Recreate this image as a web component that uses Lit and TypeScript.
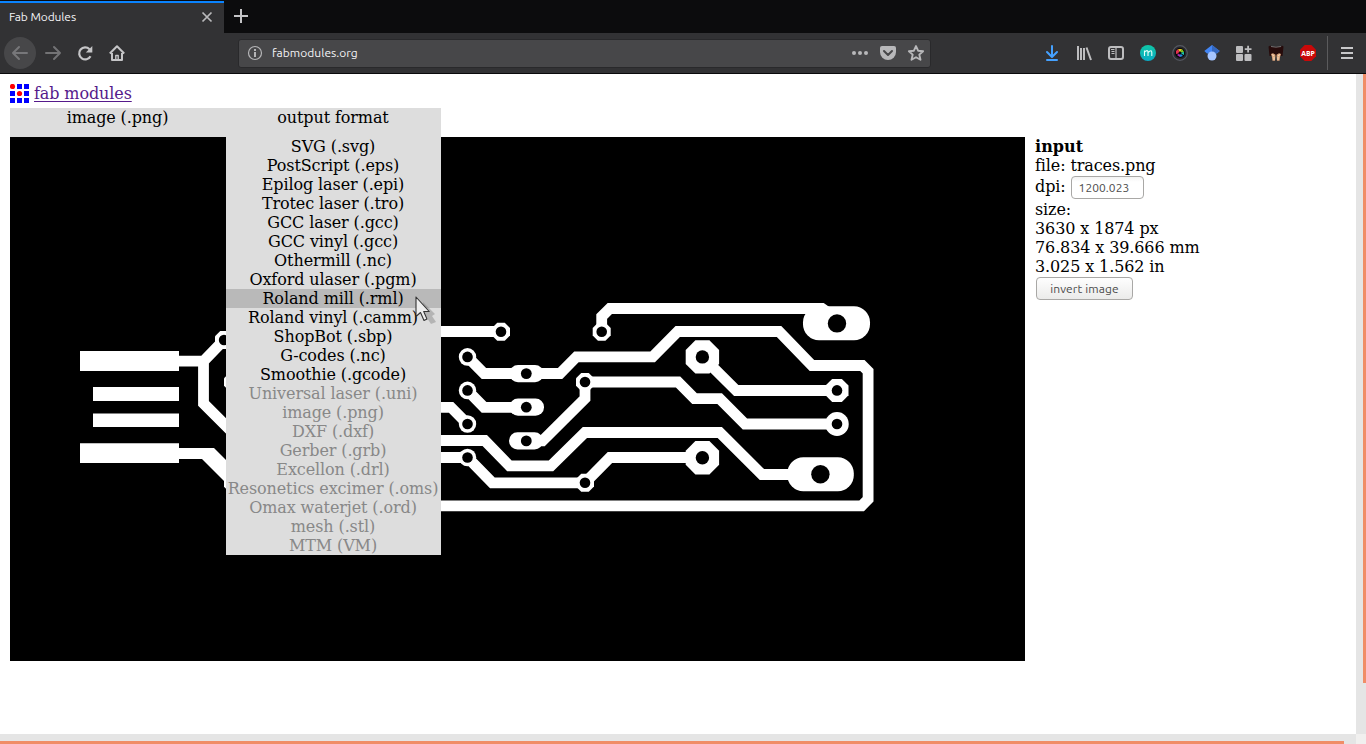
import { LitElement, html, css, svg } from "lit";
import { customElement } from "lit/decorators.js";
import { classMap } from "lit/directives/class-map.js";

const FORMATS = [
  "SVG (.svg)", "PostScript (.eps)", "Epilog laser (.epi)", "Trotec laser (.tro)",
  "GCC laser (.gcc)", "GCC vinyl (.gcc)", "Othermill (.nc)", "Oxford ulaser (.pgm)",
  "Roland mill (.rml)", "Roland vinyl (.camm)", "ShopBot (.sbp)", "G-codes (.nc)",
  "Smoothie (.gcode)", "Universal laser (.uni)", "image (.png)", "DXF (.dxf)",
  "Gerber (.grb)", "Excellon (.drl)", "Resonetics excimer (.oms)",
  "Omax waterjet (.ord)", "mesh (.stl)", "MTM (VM)",
];
const FIRST_DISABLED = 13;
const HOVERED = 8;

@customElement("browser-chrome")
class BrowserChrome extends LitElement {
  static styles = css`
    :host { display: block; height: 74px; font-family: "Ubuntu", "Noto Sans", sans-serif; font-size: 12px; color: #f4f4f6; letter-spacing: 0; }
    * { box-sizing: border-box; }
    svg { display: block; flex: none; overflow: visible; }
    .tabs { height: 33px; background: #0c0c0d; display: flex; align-items: stretch; padding-top: 1px; }
    .tab { width: 224px; background: #323234; border-top: 2px solid #0a84ff; display: flex; align-items: center; justify-content: space-between; padding: 0 9px 2px; }
    .title { letter-spacing: -0.1px; line-height: 16px; padding-bottom: 1px; }
    .plus { margin: 7px 0 0 9px; }
    .bar { height: 41px; background: #323234; border-bottom: 1px solid #0a0a0b; display: flex; align-items: center; padding-left: 4px; }
    .back { width: 32px; height: 32px; border-radius: 50%; background: #474749; display: grid; place-items: center; }
    .gap { margin-left: 16px; }
    .first { margin-left: 9px; }
    .url { width: 693px; height: 29px; margin-left: 113px; background: #474749; border: 1px solid #29292b; border-radius: 3px; display: flex; align-items: center; padding: 0 6px 0 8px; }
    .host { flex: 1; margin-left: 9px; letter-spacing: 0.03px; line-height: 16px; padding-bottom: 1px; }
    .url svg + svg { margin-left: 12px; }
    .tools { display: flex; margin-left: 113px; gap: 16px; }
    .abp { font: 700 7.5px/10px "Open Sans", sans-serif; }
    .menu { height: 34px; border-left: 1px solid #5b5b5d; margin-left: 11px; padding-left: 11px; display: flex; align-items: center; }
  `;

  render() {
    return html`
      <div class="tabs">
        <div class="tab">
          <span class="title">Fab Modules</span>
          <svg width="16" height="16" viewBox="0 0 16 16"><path d="M3.500 3.500l9 9M12.500 3.500l-9 9" stroke="#b9b9bb" stroke-width="1.700" fill="none"/></svg>
        </div>
        <svg class="plus" width="16" height="16" viewBox="0 0 16 16"><path d="M8 1v14M1 8h14" stroke="#c4c4c6" stroke-width="2"/></svg>
      </div>
      <div class="bar">
        <div class="back"><svg width="18" height="18" viewBox="0 0 18 18" fill="none" stroke="#77777a" stroke-width="2" stroke-linecap="round" stroke-linejoin="round"><path d="M16 9H2M8 3L2 9l6 6"/></svg></div>
        <svg class="first" width="16" height="16" viewBox="0 0 16 16" fill="none" stroke="#737375" stroke-width="2" stroke-linecap="round" stroke-linejoin="round"><path d="M1 8h14M9 2l6 6-6 6"/></svg>
        <svg class="gap" width="16" height="16" viewBox="0 0 16 16"><path d="M13.500 11.200A6 6 0 1 1 12.500 4.200" fill="none" stroke="#c5c5c7" stroke-width="2.200"/><path d="M15.300 1v6.500H8.800z" fill="#c5c5c7"/></svg>
        <svg class="gap" width="16" height="16" viewBox="0 0 16 16" fill="none" stroke="#c5c5c7" stroke-width="2" stroke-linejoin="round"><path d="M.8 8.500L8 1.300l7.200 7.200M3 8v7h10V8"/><path d="M6.800 15v-4.500h2.400V15" stroke-width="1.400"/></svg>
        <div class="url">
          <svg width="16" height="16" viewBox="0 0 16 16"><circle cx="8" cy="8" r="6.500" fill="none" stroke="#b5b5b7" stroke-width="1.200"/><path d="M7 7h2v5H7zM7 4h2v2H7z" fill="#b5b5b7"/></svg>
          <span class="host">fabmodules.org</span>
          <svg width="16" height="16" viewBox="0 0 16 16" fill="#b8b8ba"><circle cx="2" cy="8" r="2"/><circle cx="8" cy="8" r="2"/><circle cx="14" cy="8" r="2"/></svg>
          <svg width="16" height="16" viewBox="0 0 16 16"><path d="M2 1h12a2 2 0 0 1 2 2v4a8 8 0 0 1-16 0V3a2 2 0 0 1 2-2z" fill="#b8b8ba"/><path d="M4 6l4 4 4-4" fill="none" stroke="#474749" stroke-width="2" stroke-linecap="round" stroke-linejoin="round"/></svg>
          <svg width="16" height="16" viewBox="0 0 16 16"><path d="M8 1.100l2.100 4.600 5 .5-3.800 3.400 1.200 5.200L8 12.200l-4.500 2.600 1.200-5.200L.9 6.200l5-.5z" fill="none" stroke="#b8b8ba" stroke-width="1.900" stroke-linejoin="round"/></svg>
        </div>
        <div class="tools">
          <svg width="16" height="16" viewBox="0 0 16 16" fill="none" stroke="#45a1ff" stroke-width="2" stroke-linecap="round" stroke-linejoin="round"><path d="M8 1v10M3 7l5 5 5-5M3 15h10" /></svg>
          <svg width="16" height="16" viewBox="0 0 16 16" fill="none" stroke="#bdbdbf" stroke-width="2"><path d="M2 1v14M5 3v12M8 3v12M10.500 2.500L15 15"/></svg>
          <svg width="16" height="16" viewBox="0 0 16 16" fill="none" stroke="#bdbdbf"><rect x="1" y="2" width="14" height="12" rx="2" stroke-width="2"/><path d="M8 2v12" stroke-width="1.200"/><path d="M3 4.500h3.500M3.500 6.500h3M3.500 8.500h3" /></svg>
          <svg width="16" height="16" viewBox="0 0 16 16"><defs><linearGradient id="teal" x2="0" y2="1"><stop stop-color="#10c6a5"/><stop offset="1" stop-color="#09abc5"/></linearGradient></defs><circle cx="8" cy="8" r="8" fill="url(#teal)"/><path d="M4.500 11V5.500M4.500 7Q8 4 8 7.500V11M8 7.500Q11.800 4 11.800 7.500V11" fill="none" stroke="#e3fffb" stroke-width="1.100"/></svg>
          <svg width="16" height="16" viewBox="0 0 16 16"><circle cx="8" cy="8" r="7.300" fill="#27282d" stroke="#555861" stroke-width="1.200"/><circle cx="8" cy="8" r="5" fill="#08080a"/><path d="M8 8L6 4h4z" fill="#e8cb20"/><path d="M8 8L4 9V6l2-2z" fill="#e5304f"/><path d="M8 8l2-4 2 3z" fill="#80ca25"/><path d="M8 8l4-1v3z" fill="#19c7a9"/><path d="M8 8l3 3-3 1z" fill="#258be2"/><path d="M8 8v4l-3-2z" fill="#ae32bd"/><circle cx="8" cy="8" r="1.500" fill="#08080a"/></svg>
          <svg width="16" height="16" viewBox="0 0 16 16"><path d="M8 0L.3 6 3 8.500h10L15.700 6z" fill="#4285f4"/><path d="M8 0v8h5l2.700-2z" fill="#3568bf"/><circle cx="8" cy="11" r="4.500" fill="#a5c5ff"/></svg>
          <svg width="16" height="16" viewBox="0 0 16 16" fill="#bdbdbf"><rect width="7" height="7" rx="1" y="1"/><rect width="7" height="7" rx="1" y="9"/><rect x="8.500" y="9" width="7" height="7" rx="1"/><path d="M11.200.8h1.800V3.200h2.500V5H13v2.500h-1.800V5H8.800V3.200h2.400z"/></svg>
          <svg width="16" height="16" viewBox="0 0 16 16"><path d="M.5 1.500l2-1 .6 1.500h10l.7-1.500 1.700 1L14.500 11h-13z" fill="#260b0b"/><path d="M3 1.500q5 1.500 10 0" fill="none" stroke="#8c8686" stroke-width=".7"/><path d="M3 9l2-.8 2.500 1.500-.5 6H4.500L4 12zM13 9l-2-.8-2.500 1.500.5 6h2.500L12 12z" fill="#dda77e"/><path d="M4 9.500l2 1.500M12 9.500L10 11M6 12v3M10 12v3" stroke="#f6ddc0" stroke-width=".9"/></svg>
          <svg width="16" height="16" viewBox="0 0 16 16"><path d="M4.700 0h6.600L16 4.700v6.600L11.300 16H4.700L0 11.300V4.700z" fill="#c90909"/><text class="abp" x="1.200" y="10.800" textLength="13.600" lengthAdjust="spacingAndGlyphs" fill="#fff">ABP</text></svg>
        </div>
        <div class="menu"><svg width="16" height="16" viewBox="0 0 16 16"><path d="M2 3h12M2 8h12M2 13h12" stroke="#c8c8ca" stroke-width="2"/></svg></div>
      </div>
    `;
  }
}

type Pt = [number, number];

const octagon = (cx: number, cy: number, r: number) => {
  const k = r * 0.42;
  const pts: Pt[] = [[-k, -r], [k, -r], [r, -k], [r, k], [k, r], [-k, r], [-r, k], [-r, -k]];
  return pts.map(([x, y]) => `${cx + x},${cy + y}`).join(" ");
};

const PADS: [number, number, number, number][] = [
  [224, 340, 9, 5.2], [233, 382, 9, 5.2], [233, 483, 9, 5.2],
  [501, 331.7, 9, 5.3], [601.7, 331.7, 9, 5.3],
  [585, 382, 9, 5.3], [585, 482.8, 9, 5.3],
  [702.4, 356.9, 16.7, 6.7], [702.4, 457.7, 16.7, 6.7],
  [837, 390.4, 11.5, 5.3],
];

/* x, y, width, height, corner radius, hole x, hole y, hole radius */
const OBLONGS: number[][] = [
  [458.8, 348.1, 17.4, 17.6, 8.7, 467.5, 356.9, 5.3],
  [458.8, 381.6, 17.4, 17.6, 8.7, 467.5, 390.4, 5.3],
  [458.8, 415.2, 17.4, 17.6, 8.7, 467.5, 424, 5.3],
  [458.8, 448.7, 17.4, 17.6, 8.7, 467.5, 457.5, 5.3],
  [509.5, 365.1, 34, 17.2, 8.5, 526.3, 373.6, 5.4],
  [509.5, 398.6, 34.5, 17.2, 8.5, 526.3, 407.2, 5.4],
  [509, 432.2, 34, 17.2, 8.5, 526.3, 440.9, 5.4],
  [803, 306.2, 67, 34, 16, 837, 323.4, 9.2],
  [787.3, 457.3, 66.5, 34, 16, 820.4, 474.3, 9.2],
  [825.3, 412, 23.4, 24, 11.7, 837, 424, 5.3],
];

const TRACES = [
  "M179 361.200H203.500V403.400L240 439.900M203.500 361.200L224 340",
  "M430 331.500H501",
  "M601.700 331.700V316.600L609.900 308.500H822L827 312",
  "M467.500 356.900L484 373.500H560L576.500 356.800H652.700L677.800 331.500H779L812 365.500H862.300L868.100 371.300V499.300L861.700 505.800H430",
  "M467.500 390.400L484 407.300H526",
  "M430 407.300H451L467.500 424",
  "M526 440.900H542.500L585 398.500V382H678L694.500 398.600H719.700L745 424H837",
  "M702.400 356.900L736.300 390.500H837",
  "M430 440.500H484.700L509.500 465.900H551L585 432.500H719.700L762 474.500H800",
  "M430 457.500H467.500L492.300 482.800H585L610 457.500H702",
];

@customElement("circuit-view")
class CircuitView extends LitElement {
  static styles = css`
    :host { display: block; width: 1015px; height: 524px; background: #000; }
    svg { display: block; }
  `;
  render() {
    return html`<svg width="1015" height="524" viewBox="10 137 1015 524" fill="#fff">
      <path d="M80 351h99v20H80zM93 387h86v14H93zM93 413.400h86V427H93zM80 443.300h99V463H80zM179 448h35l22 22v23l-34-34h-23z"/>
      ${TRACES.map((d) => svg`<path d=${d} fill="none" stroke="#fff" stroke-width="10.8"/>`)}
      ${PADS.map(([x, y, r, h]) => svg`<polygon points=${octagon(x, y, r)}/><circle cx=${x} cy=${y} r=${h} fill="#000"/>`)}
      ${OBLONGS.map(([x, y, w, h, r, cx, cy, hole]) => svg`<rect x=${x} y=${y} width=${w} height=${h} rx=${r}/><circle cx=${cx} cy=${cy} r=${hole} fill="#000"/>`)}
    </svg>`;
  }
}

@customElement("app-root")
class AppRoot extends LitElement {
  static styles = css`
    :host { display: flex; flex-direction: column; width: 1366px; height: 744px; overflow: hidden; background: #fff; color: #000; font: 16px/19px "DejaVu Serif", serif; letter-spacing: -0.11px; }
    * { box-sizing: border-box; }
    .view { flex: 1; display: grid; grid-template: 660px 10px / 1356px 10px; }
    .page { padding: 10px 0 0 10px; }
    .brand { display: flex; align-items: center; gap: 5px; height: 19px; margin-bottom: 5px; }
    .brand svg { display: block; }
    .link { color: #551a8b; text-decoration: underline; text-decoration-thickness: 1px; text-underline-offset: 2px; }
    .nav { display: flex; width: 431px; height: 29px; background: #ddd; text-align: center; }
    .source { width: 216px; padding-right: 1px; }
    .target { width: 215px; position: relative; padding-right: 1px; }
    .list { position: absolute; top: 29px; left: 0; width: 215px; background: #ddd; z-index: 1; white-space: nowrap; }
    .item { height: 19px; padding-right: 1px; }
    .hover { background: #b9b9b9; }
    .off { color: #888; }
    .work { display: flex; gap: 10px; }
    .heading { letter-spacing: 0.05px; }
    .field, .button { font-family: "Ubuntu", "Noto Sans", sans-serif; font-size: 12px; color: #4c4c4c; border: 1px solid #a9a8a6; border-radius: 4px; height: 23px; }
    .row { display: flex; height: 25px; align-items: center; padding-bottom: 1px; gap: 5px; }
    .label { padding-bottom: 2px; }
    .field { width: 73px; line-height: 21px; padding-left: 7px; background: linear-gradient(#f3f3f3, #fff 5px); letter-spacing: 0.05px; }
    .button { width: 97px; margin: 1px 0 0 1px; line-height: 21px; text-align: center; background: linear-gradient(#fefefe, #ebebea); letter-spacing: 0.12px; }
    .vbar { background: #e5e5e5; padding-left: 7px; }
    .vthumb { height: 609px; background: #f08d67; }
    .hbar { background: #e5e5e5; padding-top: 7px; }
    .hthumb { width: 1344px; height: 3px; background: #f08d67; }
    .corner { background: #f1f0ef; }
    .pointer { position: absolute; left: 188px; top: 187px; z-index: 2; }
  `;

  render() {
    const cells = [0, 7, 14];
    return html`
      <browser-chrome></browser-chrome>
      <div class="view">
        <div class="page">
          <div class="brand">
            <svg width="19" height="19" viewBox="0 0 19 19">
              ${cells.map((y, r) => cells.map((x, c) =>
                r === c && r < 2
                  ? svg`<circle cx=${x + 2.5} cy=${y + 2.5} r="2.6" fill="#f00"/>`
                  : svg`<rect x=${x} y=${y} width="5" height="5" fill="#00f"/>`))}
            </svg>
            <span class="link">fab modules</span>
          </div>
          <div class="nav">
            <div class="source">image (.png)</div>
            <div class="target">output format
              <div class="list">
                ${FORMATS.map((name, i) => html`<div class=${classMap({ item: true, hover: i === HOVERED, off: i >= FIRST_DISABLED })}>${name}</div>`)}
              </div>
              <svg class="pointer" width="28" height="34" viewBox="0 0 28 34">
                <path d="M9 7L21 19l-3 2 4 6-5 2-4-6-3 3z" fill="#777" opacity=".4"/>
                <path d="M2 2v19.500l4.500-4 3.500 8 3-1.400-3.300-7.600h5.500z" fill="#eee" stroke="#333" stroke-width="1.100" stroke-linejoin="round"/>
              </svg>
            </div>
          </div>
          <div class="work">
            <circuit-view></circuit-view>
            <div>
              <b class="heading">input</b>
              <div>file: traces.png</div>
              <div class="row"><span class="label">dpi:</span><div class="field">1200.023</div></div>
              <div>size:</div>
              <div>3630 x 1874 px</div>
              <div>76.834 x 39.666 mm</div>
              <div>3.025 x 1.562 in</div>
              <div class="button">invert image</div>
            </div>
          </div>
        </div>
        <div class="vbar"><div class="vthumb"></div></div>
        <div class="hbar"><div class="hthumb"></div></div>
        <div class="corner"></div>
      </div>
    `;
  }
}
